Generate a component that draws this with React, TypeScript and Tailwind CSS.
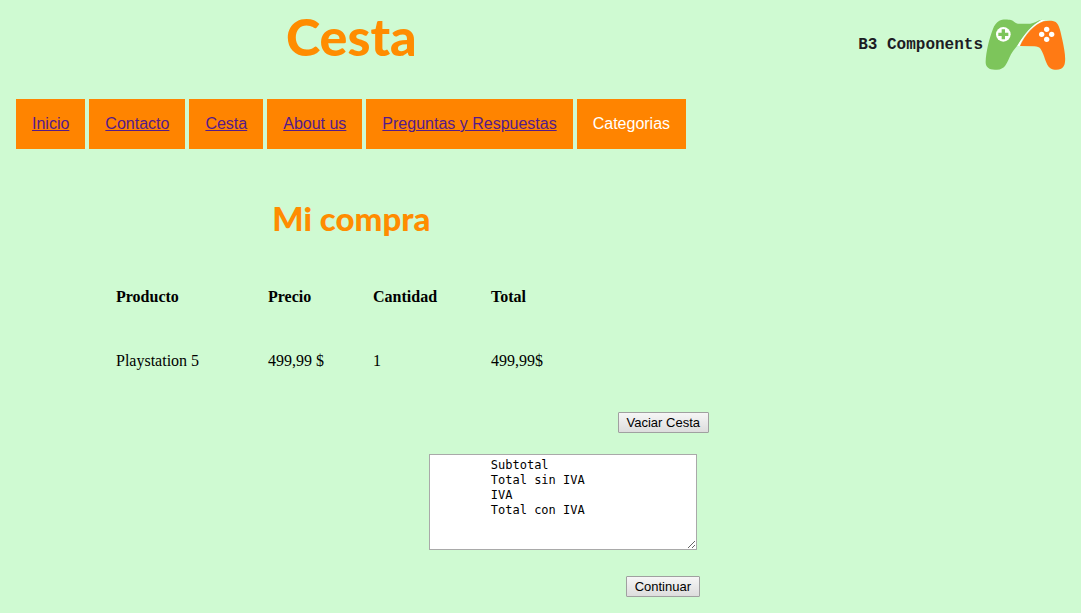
import React from "react";

const links = ["Inicio", "Contacto", "Cesta", "About us", "Preguntas y Respuestas"];

const heading = "font-['Comic_Sans_MS','Lato',sans-serif] font-black text-[#ff8c00] text-center";
const button =
  "h-[21px] px-2 rounded-[1px] border border-[#a0a0a0] bg-linear-to-b from-[#f6f6f6] to-[#dddddd] font-['Liberation_Sans',Arial,sans-serif] text-[13px] leading-[19px] text-black";

function Controller() {
  return (
    <svg className="h-[52px] w-[81px]" viewBox="15 27 243 156" aria-hidden="true">
      <path
        fill="#7dc55b"
        d="M58 32 C66 27 84 28 93 30 C101 32 105 40 113 41 L151 41 C162 40 172 31 186 29 C160 45 137 70 120 96 C107 114 95 125 88 143 C80 161 74 178 51 179 C29 181 16 173 17 155 C18 126 27 88 38 59 C43 45 49 37 58 32 Z"
      />
      <path fill="#ffffff" d="M119 108 C132 73 160 44 197 30 L184 30 C157 44 133 71 112 107 Z" />
      <path
        fill="#ff7a14"
        d="M120 108 C135 74 163 43 191 34 C203 31 219 31 227 36 C238 44 242 67 247 89 C253 116 259 149 253 165 C247 181 225 183 211 175 C197 165 194 135 182 117 C179 112 171 109 163 109 Z"
      />
      <circle cx="70" cy="73" r="22" fill="#ffffff" />
      <path fill="#7dc55b" d="M65 58 H75 V68 H85 V78 H75 V88 H65 V78 H55 V68 H65 Z" />
      <g fill="#ffffff">
        <circle cx="200" cy="58" r="8" />
        <circle cx="185" cy="73" r="8" />
        <circle cx="215" cy="73" r="8" />
        <circle cx="200" cy="88" r="8" />
      </g>
    </svg>
  );
}

export default function App() {
  return (
    <div className="min-h-screen bg-[#cffad2] pb-4 font-['Liberation_Serif','Times_New_Roman',serif] text-base text-black">
      <header className="flex h-[99px] items-start">
        <h1 className={`${heading} w-[65%] pt-1 text-[52px] leading-[64px]`}>Cesta</h1>
        <div className="flex flex-1 items-center justify-end gap-[2px] pt-[19px] pr-[15px]">
          <span className="font-['Liberation_Mono',monospace] font-bold whitespace-nowrap text-[#1c1c24]">
            B3 Components
          </span>
          <Controller />
        </div>
      </header>

      <nav className="px-4 font-['Liberation_Sans',Arial,sans-serif]">
        <ul className="flex flex-wrap gap-1">
          {links.map((label) => (
            <li key={label} className="h-[50px] bg-[#ff8400] px-4 leading-[50px]">
              <a href="#" className="text-[#551a8b] underline">
                {label}
              </a>
            </li>
          ))}
          <li className="h-[50px] bg-[#ff8400] px-4 leading-[50px] text-white">Categorias</li>
        </ul>
      </nav>

      <main className="pt-[45px]">
        <h2 className={`${heading} w-[65%] text-[33px] leading-12`}>Mi compra</h2>

        <table className="mt-[23px] ml-[116px] table-fixed text-left">
          <colgroup>
            <col className="w-[152px]" />
            <col className="w-[105px]" />
            <col className="w-[118px]" />
            <col className="w-[80px]" />
          </colgroup>
          <thead>
            <tr className="h-16">
              <th>Producto</th>
              <th>Precio</th>
              <th>Cantidad</th>
              <th>Total</th>
            </tr>
          </thead>
          <tbody>
            <tr className="h-16">
              <td>Playstation 5</td>
              <td>499,99 $</td>
              <td>1</td>
              <td>499,99$</td>
            </tr>
          </tbody>
        </table>

        <div className="mt-[19px] flex max-w-[709px] flex-col items-end">
          <button type="button" className={button}>
            Vaciar Cesta
          </button>
          <textarea
            aria-label="Resumen"
            className="mt-[21px] mr-3 h-24 w-[268px] resize border border-[#a9a9a9] bg-white px-[3px] py-[3px] font-['DejaVu_Sans_Mono',monospace] text-xs leading-[15px] text-black"
            defaultValue={"        Subtotal\n        Total sin IVA\n        IVA\n        Total con IVA"}
          />
          <button type="button" className={`${button} mt-[26px] mr-[9px]`}>
            Continuar
          </button>
        </div>
      </main>
    </div>
  );
}
